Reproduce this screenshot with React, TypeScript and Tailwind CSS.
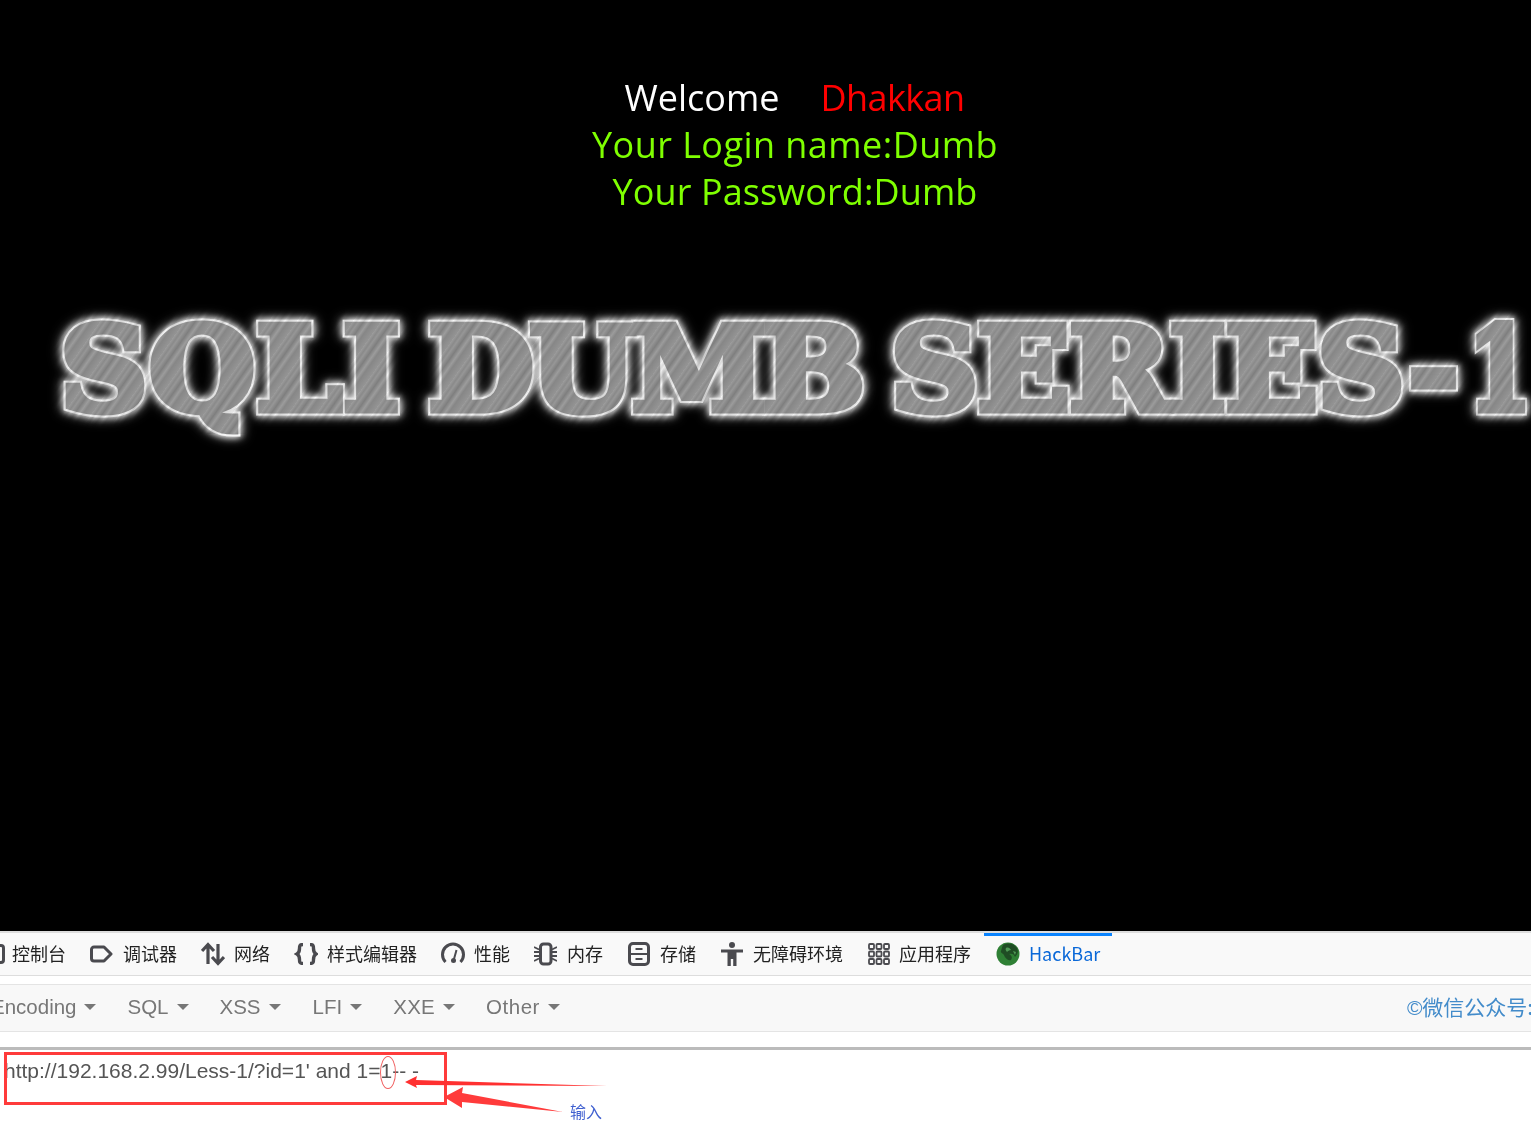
const CJK = "font-['Noto_Sans_CJK_SC',sans-serif]"

function Caret() {
  return <span className="ml-[8px] h-0 w-0 border-x-[6px] border-t-[6px] border-x-transparent border-t-[#777]" />
}

function DebuggerIcon() {
  return (
    <svg width="23" height="18" viewBox="0 0 23 18" fill="none" stroke="#4a4a4f" strokeWidth="3">
      <path d="M4 2h10l7 7-7 7H4a2.500 2.500 0 0 1-2.500-2.500v-9A2.500 2.500 0 0 1 4 2z" strokeLinejoin="round" />
    </svg>
  )
}

function NetworkIcon() {
  return (
    <svg width="24" height="24" viewBox="0 0 24 24" fill="none" stroke="#4a4a4f" strokeWidth="3.200">
      <path d="M7 22V3M1 9l6-6.500L13 9M17 2v19M11 15l6 6.500L23 15" />
    </svg>
  )
}

function BracesIcon() {
  return (
    <svg width="24" height="22" viewBox="-1 0 24 22" fill="none" stroke="#4a4a4f" strokeWidth="3.400">
      <path d="M8 1.500C4.500 1.500 4.500 3 4.500 5.500s0 4-2.500 5.500c2.500 1.500 2.500 3 2.500 5.500s0 4 3.500 4M15 1.500c3.500 0 3.500 1.500 3.500 4s0 4 2.500 5.500c-2.500 1.500-2.500 3-2.500 5.500s0 4-3.500 4" />
    </svg>
  )
}

function GaugeIcon() {
  return (
    <svg width="24" height="23" viewBox="0 0 24 23" fill="none" stroke="#4a4a4f" strokeWidth="3">
      <path d="M4.500 20C2.500 18 1.500 15.500 1.500 12.500a10.500 10.500 0 0 1 21 0c0 3-1 5.500-3 7.500" />
      <path d="M15.500 8l-2.500 9" strokeWidth="2" />
      <circle cx="12.500" cy="18.500" r="2.500" fill="#4a4a4f" stroke="none" />
    </svg>
  )
}

function MemoryIcon() {
  return (
    <svg width="23" height="24" viewBox="0 0 23 24" fill="none" stroke="#4a4a4f">
      <rect x="6.500" y="2" width="10.500" height="20" rx="3" strokeWidth="3" />
      <path d="M0 5l5 2.500M0 10h5M0 14h5M0 19l5-2.500M18 7.500l5-2.500M18 10h5M18 14h5M18 16.500l5 2.500" strokeWidth="1.800" />
    </svg>
  )
}

function StorageIcon() {
  return (
    <svg width="23" height="24" viewBox="-1 0 23 24" fill="none" stroke="#4a4a4f" strokeWidth="3">
      <rect x="1.500" y="1.500" width="19" height="21" rx="3.500" />
      <path d="M2 12h18" strokeWidth="2" />
      <path d="M7.500 7h7M7.500 17h7" strokeWidth="2" />
    </svg>
  )
}

function AccessibilityIcon() {
  return (
    <svg width="23" height="24" viewBox="-1 0 23 24" fill="#4a4a4f">
      <circle cx="11" cy="3" r="3" />
      <path d="M0 7.500h22v3h-6.500V24h-3.300v-7h-2.400v7H6.500V10.500H0z" />
    </svg>
  )
}

function AppsIcon() {
  const cells = [1, 8.500, 16]
  return (
    <svg width="23" height="22" viewBox="-1 0 23 22" fill="none" stroke="#4a4a4f" strokeWidth="1.800">
      {cells.map((y) => cells.map((x) => <rect key={`${x}-${y}`} x={x} y={y} width="5" height="5" rx="1" />))}
    </svg>
  )
}

function HackBarIcon() {
  return (
    <svg width="24" height="24" viewBox="0 0 24 24">
      <circle cx="12" cy="12" r="11.500" fill="#2f8035" />
      <path d="M7 3c4-2.500 11-2 14 3 2 4 0 7-2 9-1-3-3-4-6-3 2 1 4 3 2 6-3 1-6-2-7-5-1-2-4-2-3-4 1-3 1-4 2-6z" fill="#1f4d24" />
      <path d="M10 6c2-1 4 0 5 2-2 0-3 1-4 2-1-1-2-3-1-4zM17 9l3 1-1 3z" fill="#4f9a55" />
    </svg>
  )
}

const TABS = [
  { label: "调试器", icon: <DebuggerIcon />, gap: "gap-[10px]" },
  { label: "网络", icon: <NetworkIcon />, gap: "gap-[9px]" },
  { label: "样式编辑器", icon: <BracesIcon />, gap: "gap-[9px]" },
  { label: "性能", icon: <GaugeIcon />, gap: "gap-[9px]" },
  { label: "内存", icon: <MemoryIcon />, gap: "gap-[10px]" },
  { label: "存储", icon: <StorageIcon />, gap: "gap-[10px]" },
  { label: "无障碍环境", icon: <AccessibilityIcon />, gap: "gap-[10px]" },
  { label: "应用程序", icon: <AppsIcon />, gap: "gap-[9px]" },
]

const MENUS = [
  { label: "Encoding", className: "-ml-[9px]" },
  { label: "SQL", className: "ml-[31px]" },
  { label: "XSS", className: "ml-[31px]" },
  { label: "LFI", className: "ml-[32px]" },
  { label: "XXE", className: "ml-[31px] tracking-[0.3px]" },
  { label: "Other", className: "ml-[31px] tracking-[0.5px]" },
]

// The banner is one picture in the reference: thick grey slab letters with a
// glowing white rim. Stacked strokes of the same text give the rim and the fat body.
function LogoWords({ className }: { className: string }) {
  return (
    <div className={`flex origin-left scale-x-[1.05] items-center whitespace-nowrap ${className}`}>
      <span className="tracking-[1px]">SQLI</span>
      <span className="ml-[26px] tracking-[-4px]">DUMB</span>
      <span className="ml-[28px] tracking-[-1px]">SERIES-</span>
      <span className="ml-[10px] inline-block origin-left scale-x-[0.75]">1</span>
    </div>
  )
}

function Logo() {
  return (
    <div className="relative mt-[89px] h-[130px] bg-black pl-[60px] font-['DejaVu_Serif',serif] text-[116px] leading-[130px] font-bold">
      <LogoWords className="text-[#f4f4f4] [-webkit-text-stroke:11px_#f6f6f6] [filter:drop-shadow(0_0_3px_#fff)_drop-shadow(0_0_5px_#ccc)]" />
      <div aria-hidden className="absolute inset-0 pl-[60px]">
        <LogoWords className="text-[#9c9c9c] [-webkit-text-stroke:7px_#9c9c9c]" />
      </div>
      <div className="absolute inset-0 bg-[repeating-linear-gradient(125deg,#ffffff_0px,#e2e2e2_3px,#f6f6f6_5px,#cfcfcf_9px,#ffffff_13px,#dcdcdc_16px,#f2f2f2_23px)] mix-blend-multiply" />
    </div>
  )
}

function Annotations() {
  return (
    <>
      <div className="absolute top-[1052px] left-[4px] h-[53px] w-[443px] border-[3px] border-[#ff3b3b]" />
      <div className="absolute top-[1056px] left-[380px] h-[33px] w-[16px] rounded-[50%] border border-[#f06060]" />
      <svg className="absolute top-[1070px] left-[400px]" width="210" height="50" viewBox="0 0 210 50">
        <path d="M5 12L17 6l-1 4 191 6-191-1 1 3z" fill="#ff3030" />
        <path d="M44 27L63 17l-1 6 101 19-101-10 0 6z" fill="#ff3b3b" />
      </svg>
      <span className={`${CJK} absolute top-[1099px] left-[570px] text-base leading-6 text-[#4060d0]`}>输入</span>
    </>
  )
}

export default function App() {
  return (
    <div className="relative h-[1133px] w-[1531px] overflow-hidden bg-white font-['Liberation_Sans',sans-serif]">
      <div className="h-[931px] overflow-hidden bg-black">
        <div className="flex flex-col items-center pt-[74px] pl-[59px] font-['Open_Sans',sans-serif] text-[36px] leading-[47px]">
          <div className="flex gap-[41px] pr-[1px]">
            <span className="text-white">Welcome</span>
            <span className="tracking-[-0.6px] text-[#ff0000]">Dhakkan</span>
          </div>
          <div className="tracking-[0.45px] text-[#7fff00]">Your Login name:Dumb</div>
          <div className="tracking-[0.1px] text-[#7fff00]">Your Password:Dumb</div>
        </div>
        <Logo />
      </div>

      <div className={`${CJK} flex h-[45px] items-center border-t-2 border-b border-t-[#dddddd] border-b-[#dddddd] bg-[#f9f9f9] pb-[1px] text-[18px] whitespace-nowrap text-[#222]`}>
        <div className="-ml-[18px] flex items-center gap-[7px]">
          <span className="h-[20px] w-[23px] rounded border-[3px] border-[#4a4a4f]" />
          <span>控制台</span>
        </div>
        {TABS.map((tab) => (
          <div key={tab.label} className={`ml-[24px] flex items-center ${tab.gap}`}>
            {tab.icon}
            <span>{tab.label}</span>
          </div>
        ))}
        <div className="relative ml-[13px] flex h-full w-[128px] items-center gap-[9px] pl-[12px]">
          <span className="absolute top-0 left-0 h-[3px] w-full bg-[#0a84ff]" />
          <HackBarIcon />
          <span className="text-[#0a68d8]">HackBar</span>
        </div>
      </div>

      <div className="mt-[8px] flex h-[48px] items-center border-y border-[#e4e4e4] bg-[#f8f8f8] pb-[2px] text-[20.5px] whitespace-nowrap text-[#777]">
        {MENUS.map((menu) => (
          <div key={menu.label} className={`flex items-center ${menu.className}`}>
            <span>{menu.label}</span>
            <Caret />
          </div>
        ))}
        <span className="ml-[847px] text-[21px] text-[#428bca]">©<span className={CJK}>微信公众号:</span></span>
      </div>

      <div className="mt-[15px] h-[70px] border-t-[3px] border-[#bbbbbb] pt-[7px] pl-[4px] text-[21px] leading-[28px] whitespace-nowrap text-[#555]">
        http://192.168.2.99/Less-1/?id=1' and 1=1-- -
      </div>

      <Annotations />
    </div>
  )
}
